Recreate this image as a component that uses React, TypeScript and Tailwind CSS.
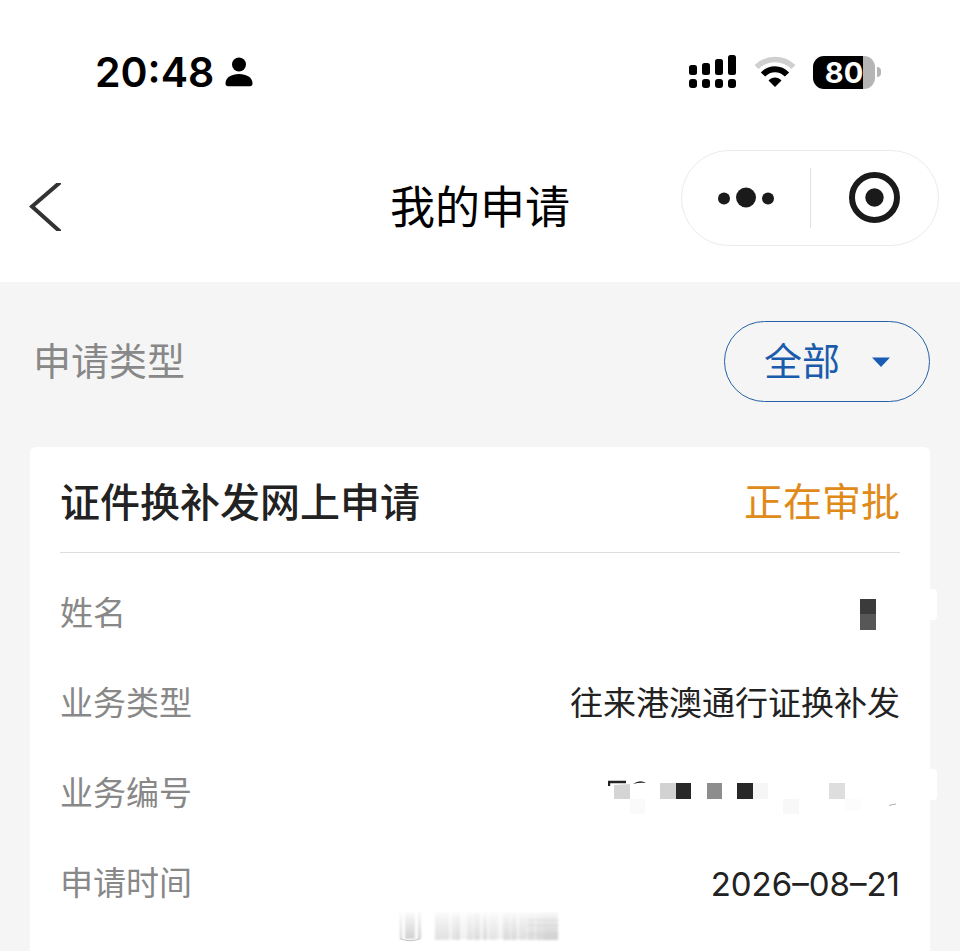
import type { ReactNode } from "react";

function PersonIcon() {
  return (
    <svg width="28" height="30" viewBox="0 0 28 30" aria-hidden="true">
      <circle cx="14" cy="7.500" r="7" fill="#000" />
      <path d="M0.500 26.500C0.500 20.500 6.500 17 14 17S27.500 20.500 27.500 26.500C27.500 28.500 26.500 29.200 25 29.200H3C1.500 29.200 0.500 28.500 0.500 26.500Z" fill="#000" />
    </svg>
  );
}

function SignalIcon() {
  return (
    <svg width="48" height="34" viewBox="0 0 48 34" aria-hidden="true">
      <rect x="0" y="10" width="8" height="10" rx="2.500" />
      <rect x="13" y="8" width="8" height="12" rx="2.500" />
      <rect x="26" y="4" width="8" height="16" rx="2.500" />
      <rect x="39" y="0" width="8" height="20" rx="2.500" />
      <rect x="0" y="24" width="8" height="9" rx="3" />
      <rect x="13" y="24" width="8" height="9" rx="3" />
      <rect x="26" y="24" width="8" height="9" rx="3" />
      <rect x="39" y="24" width="8" height="9" rx="3" />
    </svg>
  );
}

function WifiIcon() {
  return (
    <svg width="42" height="32" viewBox="0 0 42 32" fill="none" aria-hidden="true">
      <path d="M2.500 11C13 1 29 1 39.500 11" stroke="#cfcfcf" strokeWidth="5.500" />
      <path d="M9 18.500C16 11.500 26 11.500 33 18.500" stroke="#000" strokeWidth="6" />
      <path d="M14.500 24.500C18 20.500 24 20.500 27.500 24.500L21 31Z" fill="#000" />
    </svg>
  );
}

function Battery() {
  return (
    <div className="flex items-center gap-[2px]">
      <div className="flex h-[33px] w-[62px] items-center justify-center rounded-[11px] bg-linear-to-r from-black from-80% to-[#b5b5b5] to-80% font-[Inter,sans-serif] text-[29px] leading-none font-bold text-white">
        80
      </div>
      <div className="h-[10px] w-[4px] rounded-r-full bg-[#b5b5b5]" />
    </div>
  );
}

function StatusBar() {
  return (
    <div className="flex h-36 items-center justify-between pr-[79px] pl-[95px]">
      <div className="flex items-center gap-[11px]">
        <span className="font-[Inter,sans-serif] text-[41px] leading-none font-semibold text-black">20:48</span>
        <PersonIcon />
      </div>
      <div className="flex items-center gap-[17px]">
        <SignalIcon />
        <WifiIcon />
        <Battery />
      </div>
    </div>
  );
}

function NavBar() {
  return (
    <div className="grid h-[126px] grid-cols-[1fr_auto_1fr] items-center px-[21px]">
      <button type="button" aria-label="返回" className="w-fit pl-2">
        <svg width="32" height="48" viewBox="0 0 32 48" fill="none" aria-hidden="true">
          <path d="M31.500 -1L3 23.500L31.500 49" stroke="#333" strokeWidth="4" />
        </svg>
      </button>
      <h1 className="pb-[6px] text-[45px] leading-none text-black">我的申请</h1>
      <div className="mt-[6px] flex h-24 w-[258px] items-center self-start justify-self-end rounded-full border border-[#ebebeb]">
        <button type="button" aria-label="更多" className="flex flex-1 justify-center">
          <svg width="56" height="22" viewBox="0 0 56 22" fill="#1a1a1a" aria-hidden="true">
            <circle cx="6" cy="11.500" r="6" />
            <circle cx="28" cy="10.500" r="10" />
            <circle cx="50" cy="11.500" r="6" />
          </svg>
        </button>
        <span className="h-[60px] w-px bg-[#e0e0e0]" />
        <button type="button" aria-label="关闭" className="flex flex-1 justify-center">
          <svg width="52" height="52" viewBox="0 0 52 52" fill="none" aria-hidden="true">
            <circle cx="26.500" cy="25.500" r="22.500" stroke="#1a1a1a" strokeWidth="6" />
            <circle cx="26.500" cy="25.500" r="9.200" fill="#1a1a1a" />
          </svg>
        </button>
      </div>
    </div>
  );
}

function TypeFilter() {
  return (
    <div className="flex items-center justify-between pt-[39px] pr-[30px] pb-[45px] pl-[33px]">
      <label htmlFor="type" className="pb-[6px] text-[38px] leading-none text-[#888]">申请类型</label>
      <div className="relative">
        <select
          id="type"
          className="block h-[81px] w-[206px] appearance-none rounded-full border border-[#2560a8] bg-transparent pb-[6px] pl-[39px] text-[38px] text-[#1a5bab]"
        >
          <option>全部</option>
        </select>
        <svg width="18" height="10" viewBox="0 0 18 10" aria-hidden="true" className="pointer-events-none absolute top-9 right-10">
          <path d="M0 0.500H18L9 10Z" fill="#1a5bb5" />
        </svg>
      </div>
    </div>
  );
}

function Row({ label, children }: { label: string; children: ReactNode }) {
  return (
    <div className="relative flex h-[90px] items-center justify-between px-[30px] text-[33px] leading-none">
      <dt className="pb-1 text-[#888]">{label}</dt>
      <dd className="text-[#222]">{children}</dd>
    </div>
  );
}

function EdgeBump() {
  return <span className="absolute top-[21px] -right-[7px] h-[31px] w-[7px] rounded-r-[4px] bg-white" />;
}

function NameMosaic() {
  return (
    <svg width="40" height="36" viewBox="0 0 40 36" role="img" aria-label="姓名已隐藏">
      <rect x="0" y="4" width="16" height="16" fill="#3b3b3b" />
      <rect x="0" y="19" width="16" height="16" fill="#575757" />
    </svg>
  );
}

function NumberMosaic() {
  return (
    <svg width="292" height="46" viewBox="0 -10 292 46" role="img" aria-label="业务编号已隐藏">
      <path d="M1 6V2H18" fill="none" stroke="#222" strokeWidth="2.400" />
      <path d="M25 4Q32 -1 38 3Q32 2 25 4Z" fill="#222" />
      <path d="M6 5L22 4V19H6Z" fill="#d5d5d5" />
      <rect x="22" y="19" width="15" height="15" fill="#fafafa" />
      <rect x="52" y="3" width="16" height="16" fill="#d2d2d2" />
      <rect x="68" y="3" width="15" height="16" fill="#282828" />
      <rect x="99" y="3" width="15" height="16" fill="#8d8d8d" />
      <rect x="129" y="3" width="16" height="16" fill="#282828" />
      <rect x="145" y="3" width="15" height="16" fill="#f6f6f6" />
      <rect x="175" y="19" width="16" height="15" fill="#f8f8f8" />
      <rect x="221" y="3" width="16" height="16" fill="#dedede" />
      <rect x="237" y="19" width="16" height="11" fill="#fcfcfc" />
      <path d="M281 25.500L285 24.500L288 24" fill="none" stroke="#999" strokeWidth="0.800" />
    </svg>
  );
}

const smears = [
  [38, 14, 0.5],
  [55, 6, 0.5],
  [60, 3, 0.6],
  [70, 6, 0.5],
  [77, 6, 0.65],
  [86, 4, 0.7],
  [92, 9, 0.4],
  [106, 7, 0.7],
  [114, 6, 0.7],
  [122, 8, 0.6],
  [131, 7, 0.7],
  [139, 8, 0.8],
  [147, 14, 1],
];

function Smear() {
  return (
    <svg width="164" height="32" viewBox="0 0 164 32" aria-hidden="true" className="absolute top-[465px] left-[367px]">
      <defs>
        <linearGradient id="fade" x1="0" y1="0" x2="0" y2="1">
          <stop offset="0" stopColor="#d0d0d0" stopOpacity="0.1" />
          <stop offset="1" stopColor="#d0d0d0" />
        </linearGradient>
        <filter id="soft"><feGaussianBlur stdDeviation="0.8" /></filter>
      </defs>
      <g filter="url(#soft)">
        <rect x="8" y="0" width="10" height="27" fill="url(#fade)" />
        <rect x="3" y="0" width="2" height="27" fill="url(#fade)" />
        <rect x="21" y="0" width="3" height="27" fill="url(#fade)" />
        <rect x="38" y="0" width="122" height="27" fill="url(#fade)" opacity="0.3" />
        {smears.map(([x, w, o]) => (
          <rect key={x} x={x} y="0" width={w} height="28" fill="url(#fade)" opacity={o} />
        ))}
        <path d="M130 8H162M130 13H162M130 22H162" stroke="#ccc" opacity="0.6" />
      </g>
      <path d="M3 26.500Q13 31 23 26.500" fill="none" stroke="#c4c4c4" />
    </svg>
  );
}

function ApplicationCard() {
  return (
    <section className="relative mx-[30px] flex-1 rounded-t-[6px] bg-white">
      <div className="mx-[30px] flex h-[106px] items-center justify-between border-b border-[#ddd] leading-none">
        <h2 className="text-[40px] leading-none font-medium text-[#222]">证件换补发网上申请</h2>
        <span className="text-[39px] text-[#e08a1a]">正在审批</span>
      </div>
      <dl className="pt-[15px]">
        <Row label="姓名"><NameMosaic /><EdgeBump /></Row>
        <Row label="业务类型"><span className="block pb-1">往来港澳通行证换补发</span></Row>
        <Row label="业务编号"><NumberMosaic /><EdgeBump /></Row>
        <Row label="申请时间"><time dateTime="2026-08-21" className="font-[Inter,sans-serif]">2026–08–21</time></Row>
      </dl>
      <Smear />
    </section>
  );
}

export default function App() {
  return (
    <div className="flex min-h-screen flex-col bg-[#f5f5f5] font-['Noto_Sans_CJK_SC',sans-serif]">
      <header className="bg-white pb-3">
        <StatusBar />
        <NavBar />
      </header>
      <main className="flex flex-1 flex-col">
        <TypeFilter />
        <ApplicationCard />
      </main>
    </div>
  );
}
